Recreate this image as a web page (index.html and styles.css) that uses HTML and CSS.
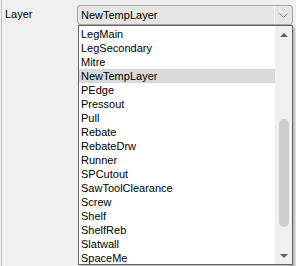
FILE: index.html
```html
<!DOCTYPE html>
<html lang="en">
<head>
    <meta charset="UTF-8">
    <title>Layer</title>
    <link rel="stylesheet" href="styles.css">
</head>
<body>
    <div class="panel">
        <div class="row">
            <div class="label">Layer</div>
            <div class="combo">
                <span class="combo-text">NewTempLayer</span>
                <span class="combo-btn">
                    <svg width="9" height="5" viewBox="0 0 9 5"><path d="M0.5 0.5 L4.5 4.5 L8.5 0.5" fill="none" stroke="#8a8a8a" stroke-width="1"/></svg>
                </span>
            </div>
        </div>
        <div class="dropdown">
            <ul class="items">
                <li>LegMain</li>
                <li>LegSecondary</li>
                <li>Mitre</li>
                <li class="selected">NewTempLayer</li>
                <li>PEdge</li>
                <li>Pressout</li>
                <li>Pull</li>
                <li>Rebate</li>
                <li>RebateDrw</li>
                <li>Runner</li>
                <li>SPCutout</li>
                <li>SawToolClearance</li>
                <li>Screw</li>
                <li>Shelf</li>
                <li>ShelfReb</li>
                <li>Slatwall</li>
                <li>SpaceMe</li>
            </ul>
            <div class="scrollbar">
                <div class="arrow up"></div>
                <div class="track">
                    <div class="thumb"></div>
                </div>
                <div class="arrow down"></div>
            </div>
        </div>
    </div>
</body>
</html>
```

FILE: styles.css
```css
html, body {
    margin: 0;
    padding: 0;
    height: 100%;
}
body {
    background-color: #f0f0f0;
    font-family: "Liberation Sans", Arial, sans-serif;
    font-size: 11px;
    color: #000;
    overflow: hidden;
}
.panel {
    margin-left: 1px;
    border-left: 1px solid #c4c4c4;
    height: 100%;
}
.row {
    display: flex;
    align-items: center;
    padding-top: 5px;
}
.label {
    width: 72px;
    padding-left: 3px;
    margin-top: -2px;
}
.combo {
    display: flex;
    align-items: center;
    width: 214px;
    height: 18px;
    border: 1px solid #a6a6a6;
    border-radius: 3px;
    background-color: #e5e5e5;
}
.combo-text {
    flex: 1;
    padding-left: 3px;
}
.combo-btn {
    display: flex;
    align-items: center;
    justify-content: center;
    width: 17px;
    height: 100%;
    border-left: 1px solid #f4f4f4;
}
.dropdown {
    display: flex;
    margin-left: 76px;
    width: 213px;
    height: 238px;
    border: 1px solid #646464;
    background-color: #fff;
    box-shadow: 2px 2px 2px rgba(0, 0, 0, 0.25);
}
.items {
    flex: 1;
    list-style: none;
    margin: 0;
    padding: 1px 0 0 0;
}
.items li {
    height: 14px;
    line-height: 14px;
    padding-left: 2px;
}
.items li.selected {
    background-color: #d9d9d9;
}
.scrollbar {
    display: flex;
    flex-direction: column;
    width: 17px;
    background-color: #f0f0f0;
}
.arrow {
    height: 17px;
    display: flex;
    align-items: center;
    justify-content: center;
}
.arrow.up::before {
    content: "";
    border-left: 4px solid transparent;
    border-right: 4px solid transparent;
    border-bottom: 4px solid #606060;
}
.arrow.down::before {
    content: "";
    border-left: 4px solid transparent;
    border-right: 4px solid transparent;
    border-top: 4px solid #606060;
}
.track {
    flex: 1;
    display: flex;
    flex-direction: column;
    padding: 76px 0 20px 0;
}
.thumb {
    flex: 1;
    margin: 0 3px 0 4px;
    border-radius: 5px;
    background-color: #cdcdcd;
}
```
